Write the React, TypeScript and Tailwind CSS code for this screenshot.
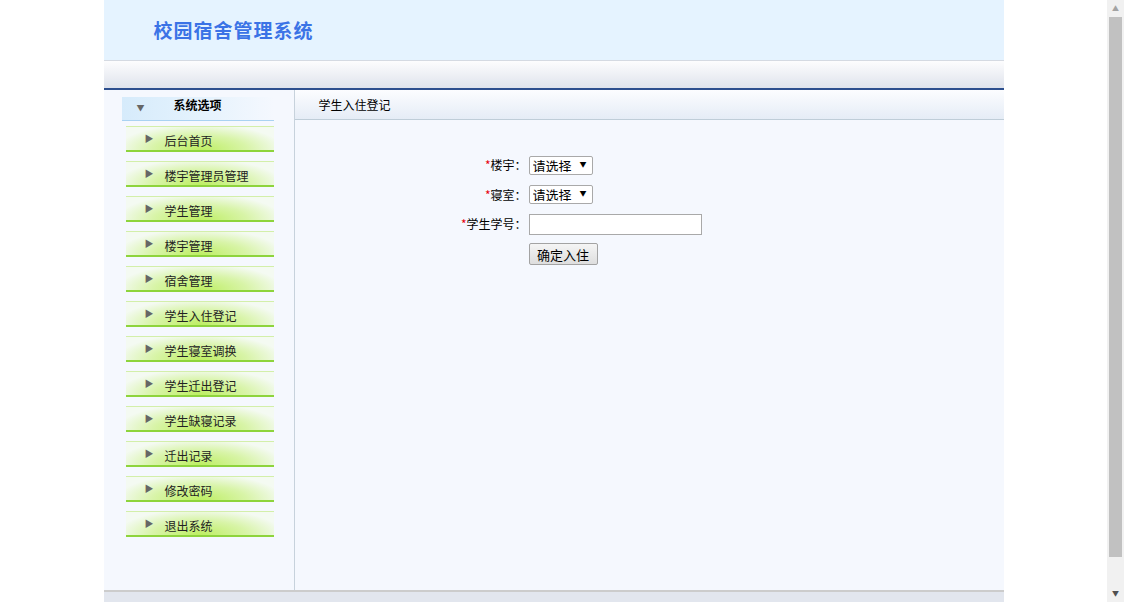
import React from 'react';

const menuItems = [
  '后台首页',
  '楼宇管理员管理',
  '学生管理',
  '楼宇管理',
  '宿舍管理',
  '学生入住登记',
  '学生寝室调换',
  '学生迁出登记',
  '学生缺寝记录',
  '迁出记录',
  '修改密码',
  '退出系统',
];

const font = { fontFamily: '"Noto Sans CJK SC", "Liberation Sans", sans-serif' };

const FakeSelect: React.FC = () => (
  <div className="relative w-[64px] h-[19px]">
    <select className="appearance-none w-full h-full bg-white border border-[#a9a9a9] rounded-[2px] pl-[3px] text-[13px] leading-none text-black outline-none">
      <option>请选择</option>
    </select>
    <span className="absolute right-[6px] top-[3px] text-[7px] text-black pointer-events-none">▼</span>
  </div>
);

// 浏览器滚动条样式
const ScrollBar: React.FC = () => (
  <div className="w-[17px] h-full bg-[#f1f1f1] flex flex-col items-center">
    <div className="h-[17px] flex items-center justify-center text-[7px] text-[#a3a3a3]">▲</div>
    <div className="w-[13px] h-[540px] bg-[#c1c1c1]" />
    <div className="flex-1 flex items-end justify-center pb-[4px] text-[7px] text-[#505050]">▼</div>
  </div>
);

export default function App() {
  return (
    <div className="h-[602px] flex bg-white overflow-hidden" style={font}>
      <div className="flex-1 overflow-hidden">
        <div className="w-[900px] mx-auto">
          {/* 顶部标题 */}
          <div className="h-[60px] bg-[#e5f3ff] flex items-center pl-[50px]">
            <h1 className="text-[19px] font-bold text-[#3b73e6] tracking-[1px]">校园宿舍管理系统</h1>
          </div>
          <div className="h-[30px] border-t border-[#d5dae2] bg-gradient-to-b from-[#fdfdfe] to-[#dfe3ec] border-b-2 border-b-[#2d4f8e]" />

          {/* 主体 */}
          <div className="flex h-[500px] bg-[#f5f8fe]">
            <div className="w-[191px] border-r border-[#c7d2dc] pt-[7px]">
              <div className="ml-[18px] w-[152px] h-[24px] pb-[7px] flex items-center bg-gradient-to-r from-[#d6ebfb] via-[#e4f2fd] to-[#f5f8fe] border-b border-[#a9d2f2]">
                <span className="ml-[15px] mt-[5px] text-[8px] text-[#666]">▼</span>
                <span className="ml-[29px] text-[12px] font-bold text-black">系统选项</span>
              </div>
              <div className="mt-[5px]">
                {menuItems.map((m) => (
                  <div key={m} className="h-[35px]">
                    <div className="ml-[22px] w-[148px] h-[26px] flex items-center border-t border-[#d3efaa] border-b-2 border-b-[#8ed43c] bg-[radial-gradient(ellipse_at_50%_100%,#bdee62_0%,#d8f4a8_45%,#f4faf2_80%)]">
                      <span className="ml-[19px] text-[9px] text-[#666] leading-none">▶</span>
                      <span className="ml-[11px] mt-[5px] text-[12px] text-[#222]">{m}</span>
                    </div>
                  </div>
                ))}
              </div>
            </div>

            <div className="flex-1">
              <div className="h-[30px] flex items-center pl-[24px] bg-gradient-to-b from-[#fcfdff] to-[#e5ecf6] border-b border-[#bfcdd8]">
                <span className="text-[12px] text-black">学生入住登记</span>
              </div>
              <div className="pt-[32px] pl-[149px] flex flex-col text-[12px] text-black">
                <div className="flex items-center h-[30px] -mt-[2px]">
                  <label className="w-[85px] text-right pr-[2px]"><span className="text-red-600">*</span>楼宇：</label>
                  <FakeSelect />
                </div>
                <div className="flex items-center h-[29px]">
                  <label className="w-[85px] text-right pr-[2px]"><span className="text-red-600">*</span>寝室：</label>
                  <FakeSelect />
                </div>
                <div className="flex items-center h-[30px]">
                  <label className="w-[85px] text-right pr-[2px]"><span className="text-red-600">*</span>学生学号：</label>
                  <input className="w-[173px] h-[21px] bg-white border border-[#a9a9a9] outline-none px-1 text-[13px]" />
                </div>
                <div className="flex items-center h-[30px]">
                  <div className="w-[85px]" />
                  <button className="w-[69px] h-[22px] border border-[#a3a3a3] rounded-[2px] bg-gradient-to-b from-[#f5f5f5] to-[#dedede] text-[13px] text-black leading-none">
                    确定入住
                  </button>
                </div>
              </div>
            </div>
          </div>

          {/* 底部 */}
          <div className="h-[43px] border-t-2 border-[#cccccc] bg-[#e2e6ee]" />
        </div>
      </div>
      <ScrollBar />
    </div>
  );
}
